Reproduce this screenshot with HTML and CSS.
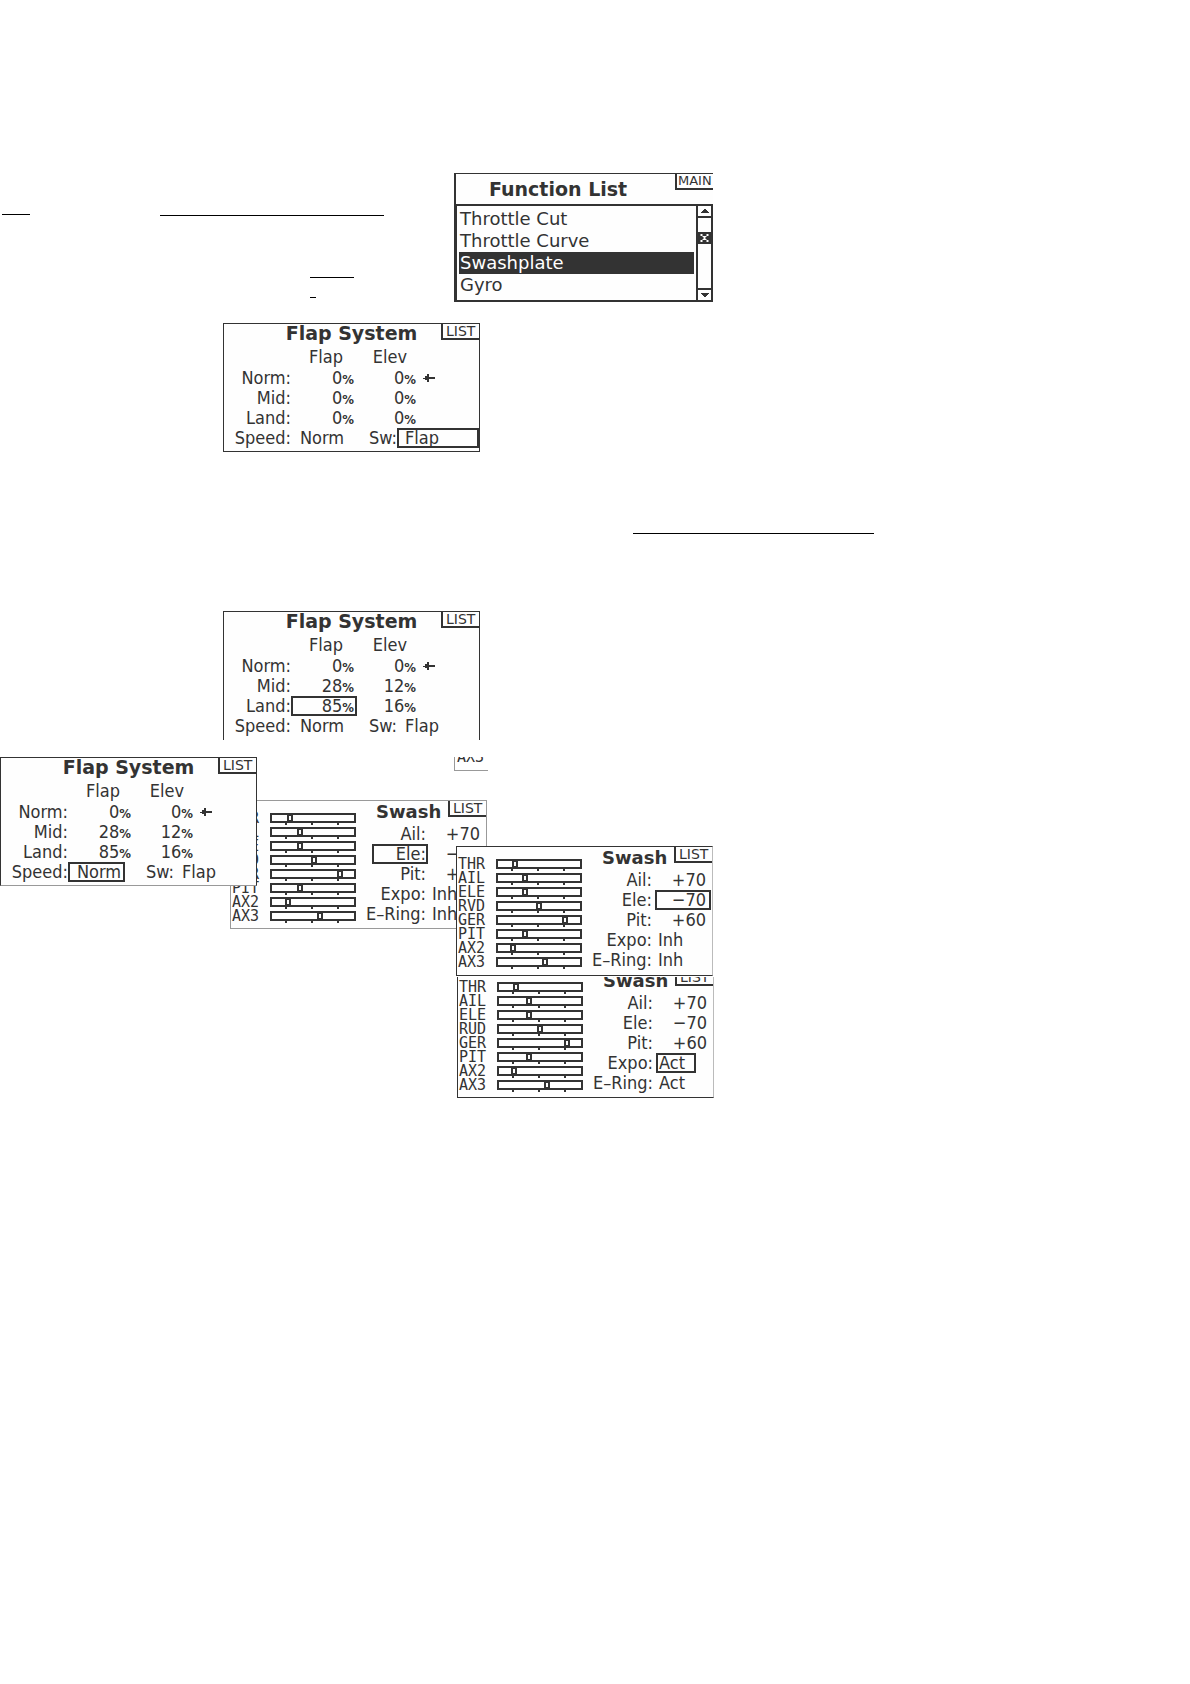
FILE: index.html
```html
<!DOCTYPE html>
<html lang="en">
<head>
<meta charset="utf-8">
<title>Transmitter screens</title>
<link rel="stylesheet" href="styles.css">
</head>
<body>
<main class="canvas">
  <hr class="rule rule-a">
  <hr class="rule rule-b">
  <hr class="rule rule-c">
  <hr class="rule rule-d">
  <hr class="rule rule-e">

  <section class="screen functions">
    <span class="tag">MAIN</span>
    <h2 class="functions-title">Function List</h2>
    <div class="functions-body">
      <ul class="menu">
        <li>Throttle Cut</li>
        <li>Throttle Curve</li>
        <li class="current">Swashplate</li>
        <li>Gyro</li>
      </ul>
      <div class="scrollbar">
        <button class="arrow" type="button" aria-label="Up"><svg width="8" height="4" viewBox="0 0 8 4"><path d="M0 4V3H1V2H2V1H3V0H5V1H6V2H7V3H8V4Z"/></svg></button>
        <span class="track"><svg class="grip" width="12" height="12" viewBox="0 0 12 12"><path d="M2 2H4V4H2ZM8 2H10V4H8ZM4 4H8V5H4ZM5 5H7V7H5ZM4 7H8V8H4ZM2 8H4V10H2ZM8 8H10V10H8Z"/></svg></span>
        <button class="arrow" type="button" aria-label="Down"><svg width="8" height="4" viewBox="0 0 8 4"><path d="M0 0V1H1V2H2V3H3V4H5V3H6V2H7V1H8V0Z"/></svg></button>
      </div>
    </div>
  </section>

  <section class="screen flap flap-a">
    <span class="tag">LIST</span>
    <h2 class="flap-title">Flap System</h2>
    <table class="values">
      <colgroup><col class="c-label"><col class="c-flap"><col class="c-elev"><col></colgroup>
      <thead><tr><td></td><th>Flap</th><th>Elev</th><td></td></tr></thead>
      <tbody>
        <tr><th>Norm:</th><td>0<b>%</b></td><td>0<b>%</b></td><td class="mark"><svg width="12" height="9" viewBox="0 0 12 9"><path d="M0 4H2V2H4V0H6V3H12V5H6V8H4V6H2V5H0Z"/></svg></td></tr>
        <tr><th>Mid:</th><td>0<b>%</b></td><td>0<b>%</b></td><td></td></tr>
        <tr><th>Land:</th><td>0<b>%</b></td><td>0<b>%</b></td><td></td></tr>
      </tbody>
    </table>
    <div class="options"><span class="o-label">Speed:</span><span class="o-speed">Norm</span><span class="o-switch">Sw:</span><span class="o-value selected">Flap</span></div>
  </section>

  <section class="screen flap flap-b">
    <span class="tag">LIST</span>
    <h2 class="flap-title">Flap System</h2>
    <table class="values">
      <colgroup><col class="c-label"><col class="c-flap"><col class="c-elev"><col></colgroup>
      <thead><tr><td></td><th>Flap</th><th>Elev</th><td></td></tr></thead>
      <tbody>
        <tr><th>Norm:</th><td>0<b>%</b></td><td>0<b>%</b></td><td class="mark"><svg width="12" height="9" viewBox="0 0 12 9"><path d="M0 4H2V2H4V0H6V3H12V5H6V8H4V6H2V5H0Z"/></svg></td></tr>
        <tr><th>Mid:</th><td>28<b>%</b></td><td>12<b>%</b></td><td></td></tr>
        <tr><th>Land:</th><td class="selected">85<b>%</b></td><td>16<b>%</b></td><td></td></tr>
      </tbody>
    </table>
    <div class="options"><span class="o-label">Speed:</span><span class="o-speed">Norm</span><span class="o-switch">Sw:</span><span class="o-value">Flap</span></div>
  </section>

  <section class="screen swash swash-a">
    <span class="tag">LIST</span>
    <ul class="channels">
      <li>THR<span class="bar"><i style="left:15px"></i></span></li>
      <li>AIL<span class="bar"><i style="left:25px"></i></span></li>
      <li>ELE<span class="bar"><i style="left:25px"></i></span></li>
      <li>RVD<span class="bar"><i style="left:39px"></i></span></li>
      <li>GER<span class="bar"><i style="left:65px"></i></span></li>
      <li>PIT<span class="bar"><i style="left:25px"></i></span></li>
      <li>AX2<span class="bar"><i style="left:13px"></i></span></li>
      <li>AX3<span class="bar"><i style="left:45px"></i></span></li>
    </ul>
    <div class="params">
      <h2 class="swash-title">Swash</h2>
      <dl>
        <dt>Ail:</dt><dd class="num">+70</dd>
        <dt class="selected">Ele:</dt><dd class="num">−70</dd>
        <dt>Pit:</dt><dd class="num">+60</dd>
        <dt>Expo:</dt><dd>Inh</dd>
        <dt>E–Ring:</dt><dd>Inh</dd>
      </dl>
    </div>
  </section>

  <section class="screen flap flap-c">
    <span class="tag">LIST</span>
    <h2 class="flap-title">Flap System</h2>
    <table class="values">
      <colgroup><col class="c-label"><col class="c-flap"><col class="c-elev"><col></colgroup>
      <thead><tr><td></td><th>Flap</th><th>Elev</th><td></td></tr></thead>
      <tbody>
        <tr><th>Norm:</th><td>0<b>%</b></td><td>0<b>%</b></td><td class="mark"><svg width="12" height="9" viewBox="0 0 12 9"><path d="M0 4H2V2H4V0H6V3H12V5H6V8H4V6H2V5H0Z"/></svg></td></tr>
        <tr><th>Mid:</th><td>28<b>%</b></td><td>12<b>%</b></td><td></td></tr>
        <tr><th>Land:</th><td>85<b>%</b></td><td>16<b>%</b></td><td></td></tr>
      </tbody>
    </table>
    <div class="options"><span class="o-label">Speed:</span><span class="o-speed selected">Norm</span><span class="o-switch">Sw:</span><span class="o-value">Flap</span></div>
  </section>

  <div class="fragment">AX3</div>

  <section class="screen swash swash-b">
    <span class="tag">LIST</span>
    <ul class="channels">
      <li>THR<span class="bar"><i style="left:14px"></i></span></li>
      <li>AIL<span class="bar"><i style="left:24px"></i></span></li>
      <li>ELE<span class="bar"><i style="left:24px"></i></span></li>
      <li>RVD<span class="bar"><i style="left:38px"></i></span></li>
      <li>GER<span class="bar"><i style="left:64px"></i></span></li>
      <li>PIT<span class="bar"><i style="left:24px"></i></span></li>
      <li>AX2<span class="bar"><i style="left:12px"></i></span></li>
      <li>AX3<span class="bar"><i style="left:44px"></i></span></li>
    </ul>
    <div class="params">
      <h2 class="swash-title">Swash</h2>
      <dl>
        <dt>Ail:</dt><dd class="num">+70</dd>
        <dt>Ele:</dt><dd class="num selected">−70</dd>
        <dt>Pit:</dt><dd class="num">+60</dd>
        <dt>Expo:</dt><dd>Inh</dd>
        <dt>E–Ring:</dt><dd>Inh</dd>
      </dl>
    </div>
  </section>

  <div class="cropped">
    <section class="screen swash swash-c">
      <span class="tag">LIST</span>
      <ul class="channels">
        <li>THR<span class="bar"><i style="left:14px"></i></span></li>
        <li>AIL<span class="bar"><i style="left:27px"></i></span></li>
        <li>ELE<span class="bar"><i style="left:27px"></i></span></li>
        <li>RUD<span class="bar"><i style="left:38px"></i></span></li>
        <li>GER<span class="bar"><i style="left:65px"></i></span></li>
        <li>PIT<span class="bar"><i style="left:27px"></i></span></li>
        <li>AX2<span class="bar"><i style="left:12px"></i></span></li>
        <li>AX3<span class="bar"><i style="left:45px"></i></span></li>
      </ul>
      <div class="params">
        <h2 class="swash-title">Swash</h2>
        <dl>
          <dt>Ail:</dt><dd class="num">+70</dd>
          <dt>Ele:</dt><dd class="num">−70</dd>
          <dt>Pit:</dt><dd class="num">+60</dd>
          <dt>Expo:</dt><dd class="selected">Act</dd>
          <dt>E–Ring:</dt><dd>Act</dd>
        </dl>
      </div>
    </section>
  </div>
</main>
</body>
</html>
```
FILE: styles.css
```css
* { box-sizing: border-box; }

body {
  margin: 0;
  background: #fff;
  color: #333;
  font: 18px/20px "DejaVu Sans Condensed", "DejaVu Sans", sans-serif;
}

h2, ul, dl, dd { margin: 0; padding: 0; }
ul { list-style: none; }
h2 { font: bold 19px/20px "DejaVu Sans", sans-serif; }
svg { display: block; fill: currentColor; }

.canvas { position: relative; min-height: 100vh; }

/* Loose underlines */
.rule { position: absolute; margin: 0; border: 0; height: 1px; background: #000; }
.rule-a { left: 2px; top: 214px; width: 28px; }
.rule-b { left: 160px; top: 215px; width: 224px; }
.rule-c { left: 310px; top: 277px; width: 44px; }
.rule-d { left: 310px; top: 297px; width: 6px; }
.rule-e { left: 633px; top: 533px; width: 241px; }

/* LCD screens, placed freely on the canvas */
.screen {
  position: absolute;
  width: 257px;
  height: 129px;
  overflow: hidden;
  background: #fefefe;
  border: 1px solid #333;
}

.tag {
  position: absolute;
  top: 0;
  right: 0;
  width: 38px;
  height: 16px;
  padding-left: 3px;
  overflow: hidden;
  border: solid #333;
  border-width: 0 0 2px 2px;
  font: 14px/14px "DejaVu Sans", sans-serif;
}

.selected { outline: 2px solid #333; outline-offset: -2px; }

/* Function list */
.functions { left: 454px; top: 173px; width: 259px; border-width: 1px 0 2px 2px; }
.functions .tag { padding-left: 1px; font-size: 13px; }
.functions-title { height: 30px; padding: 5px 0 0 33px; }
.functions-body { display: flex; border-top: 2px solid #333; border-left: 1px solid #333; }
.menu { flex: 1; padding: 2px 2px 4px 2px; font: 18px/22px "DejaVu Sans", sans-serif; }
.menu li { padding-left: 1px; }
.menu .current { background: #333; color: #fff; }
.scrollbar { display: flex; flex-direction: column; width: 17px; border: solid #333; border-width: 0 2px; }
.arrow {
  display: flex;
  align-items: center;
  justify-content: center;
  height: 10px;
  padding: 0;
  border: 0;
  background: none;
  color: #333;
}
.track { flex: 1; padding-top: 14px; border: solid #333; border-width: 2px 0; }
.grip { width: 100%; background: #333; fill: #fff; }

/* Flap system */
.flap-a { left: 223px; top: 323px; }
.flap-b { left: 223px; top: 611px; border-bottom: 0; }
.flap-c { left: 0; top: 757px; border-bottom-color: #999; }
.flap-title { height: 22px; text-align: center; line-height: 18px; }
.values { width: 100%; table-layout: fixed; border-collapse: collapse; }
.c-label { width: 67px; }
.c-flap { width: 66px; }
.c-elev { width: 62px; }
.values th { padding: 0; font-weight: normal; text-align: right; }
.values td { padding: 0 3px 0 0; text-align: right; }
.values tbody tr { height: 20px; }
.values thead th { height: 22px; padding-left: 4px; text-align: center; }
.values b { font-size: 13px; line-height: 1px; }
.values .mark { padding-left: 4px; }
.options { display: flex; }
.o-label { width: 67px; text-align: right; }
.o-speed { width: 57px; padding-left: 9px; }
.o-switch { width: 49px; text-align: right; }
.o-value { flex: 1; padding-left: 8px; }

/* Swashplate */
.swash { display: flex; }
.swash-a { left: 230px; top: 800px; border-color: #999; }
.swash-b { left: 456px; top: 846px; height: 130px; border-right-color: #bbb; }
.channels { width: 125px; padding: 10px 0 0 1px; font: 15px/14px "DejaVu Sans Mono", monospace; }
.channels li { display: flex; justify-content: space-between; height: 14px; }
.bar { position: relative; width: 86px; height: 10px; margin-top: 2px; border: 2px solid #333; }
.bar::after {
  content: "";
  position: absolute;
  left: 13px;
  top: 8px;
  width: 54px;
  height: 2px;
  background: repeating-linear-gradient(to right, #333 0 2px, transparent 2px 26px);
}
.bar i { position: absolute; top: 0; width: 6px; height: 6px; border: 2px solid #333; border-width: 1px 2px; }
.params { flex: 1; }
.swash-title { height: 23px; padding: 1px 0 0 20px; font-size: 18px; }
.params dl { display: grid; grid-template-columns: 56px 56px; justify-content: start; padding-left: 16px; column-gap: 1px; }
.params dt { display: flex; justify-content: flex-end; padding-right: 2px; white-space: nowrap; }
.params dd { padding: 0 5px 0 3px; }
.params dd.selected:not(.num) { justify-self: start; width: 40px; }
.params .num { text-align: right; }

/* Screens cut off along their top edge */
.cropped { position: absolute; left: 457px; top: 977px; display: flex; align-items: flex-end; height: 121px; overflow: hidden; }
.cropped .screen { position: relative; flex: none; border-right-color: #bbb; }
.fragment {
  position: absolute;
  left: 454px;
  top: 757px;
  width: 34px;
  height: 14px;
  padding-left: 2px;
  overflow: hidden;
  border: solid #999;
  border-width: 0 0 1px 1px;
  font: 15px/1px "DejaVu Sans Mono", monospace;
}
```
